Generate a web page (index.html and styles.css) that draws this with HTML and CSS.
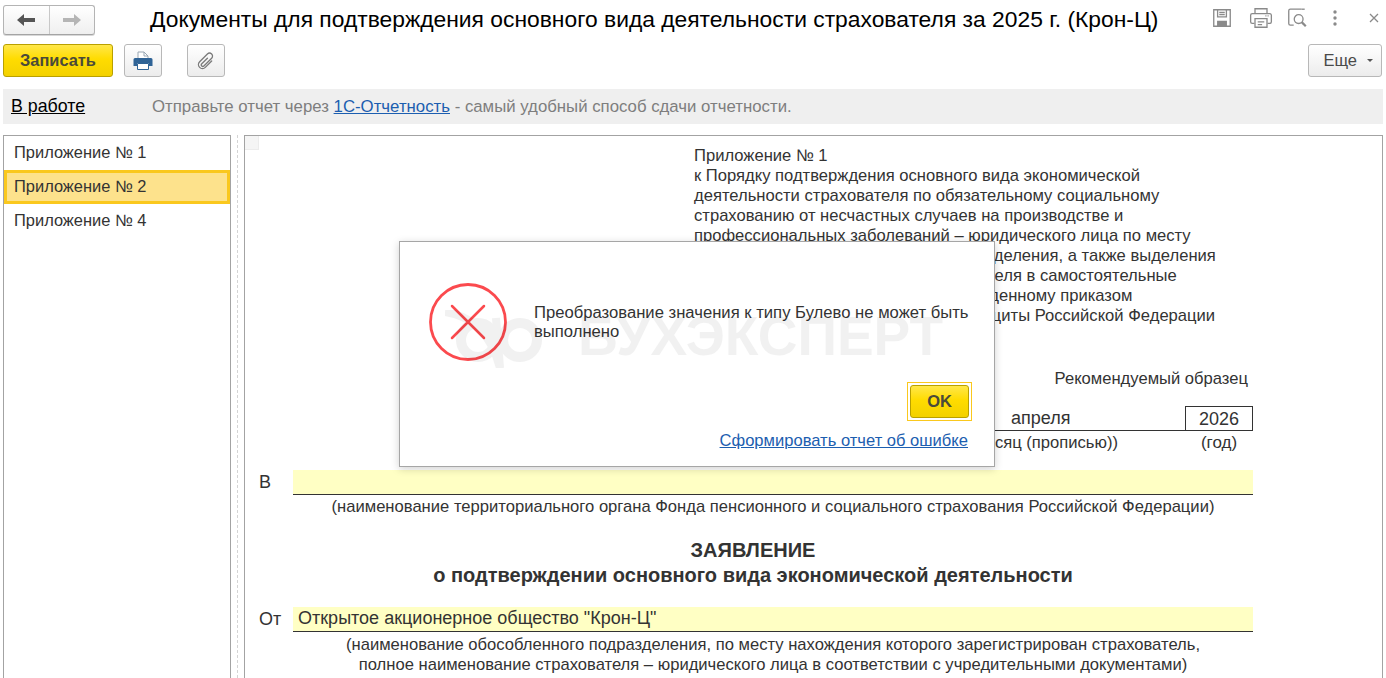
FILE: index.html
```html
<!DOCTYPE html>
<html lang="ru">
<head>
<meta charset="utf-8">
<title>Документы для подтверждения основного вида деятельности</title>
<link rel="stylesheet" href="styles.css">
</head>
<body>
<div class="page">
  <header class="titlebar">
    <div class="nav">
      <button class="nav-btn"><svg width="18" height="14" viewBox="0 0 18 14"><path d="M0 7 7 1v4h11v4H7v4z" fill="#555"/></svg></button>
      <button class="nav-btn"><svg width="18" height="14" viewBox="0 0 18 14"><path d="M18 7 11 1v4H0v4h11v4z" fill="#b5b5b5"/></svg></button>
    </div>
    <h1 class="title">Документы для подтверждения основного вида деятельности страхователя за 2025 г. (Крон-Ц)</h1>
    <div class="sys-icons">
      <svg class="sys" width="22" height="22" viewBox="0 0 20 20" fill="none" stroke="#8a8a8a" stroke-width="1.200"><path d="M2.500 2.500h15v15h-15z"/><path d="M6 2.500v6.500h8V2.500M7.500 5h5M7.500 7h5"/><path d="M5.500 17.500v-5h9v5z" fill="#8a8a8a" stroke="none"/></svg>
      <svg class="sys" width="24" height="22" viewBox="0 0 22 20" fill="none" stroke="#8a8a8a" stroke-width="1.200"><path d="M5.500 6V1.500h11V6"/><path d="M5 15H3q-1.500 0-1.500-1.500v-6Q1.500 6 3 6h16q1.500 0 1.500 1.500v6q0 1.500-1.500 1.500h-2"/><path d="M5.500 10.500h11v8h-11zM8 13.500h6M8 16h4"/><path d="M15 8h3" stroke-dasharray="1 1"/></svg>
      <svg class="sys" width="22" height="22" viewBox="0 0 20 20" fill="none" stroke="#8a8a8a" stroke-width="1.200"><path d="M14 2H4q-1.500 0-1.500 1.500V15q0 1.500 1.500 1.500h3"/><path d="M14 2h3"/><circle cx="11.500" cy="11" r="4"/><path d="m14.500 14 3.500 3.500" stroke-width="2"/></svg>
      <svg class="sys" width="6" height="20" viewBox="0 0 6 20" fill="#8a8a8a"><circle cx="3" cy="4" r="1.700"/><circle cx="3" cy="10" r="1.700"/><circle cx="3" cy="16" r="1.700"/></svg>
      <svg class="sys" width="10" height="10" viewBox="0 0 10 10" fill="none" stroke="#8a8a8a" stroke-width="1.300"><path d="m1 1 8 8M9 1 1 9"/></svg>
    </div>
  </header>

  <div class="toolbar">
    <button class="btn-primary btn-write">Записать</button>
    <button class="btn-icon btn-print"><svg width="20" height="20" viewBox="0 0 20 20"><path d="M5 9V1h6l4 4v4z" fill="#fff" stroke="#9aa7b3"/><path d="M11 1v4h4" fill="none" stroke="#9aa7b3"/><path d="M2 7h16q1.500 0 1.500 1.500V15H16v-3H4v3H.5V8.500Q.5 7 2 7z" fill="#2f6396"/><path d="M4.500 12.500h11v6h-11z" fill="#fff" stroke="#2f6396"/></svg></button>
    <button class="btn-icon btn-clip"><svg width="20" height="20" viewBox="0 0 20 20" fill="none" stroke="#7a7a7a" stroke-width="1.300" stroke-linecap="round"><path transform="rotate(45 10 10)" d="M9 7v8a1.500 1.500 0 0 0 3 0V4a3 3 0 0 0-6 0v11a4 4 0 0 0 8 0V6"/></svg></button>
    <button class="btn-more">Еще <span class="caret"></span></button>
  </div>

  <div class="status">
    <a class="status-state">В работе</a>
    <span class="status-text">Отправьте отчет через <a class="link">1С-Отчетность</a> - самый удобный способ сдачи отчетности.</span>
  </div>

  <main class="workspace">
    <nav class="side">
      <div class="side-item">Приложение № 1</div>
      <div class="side-item side-item-active">Приложение № 2</div>
      <div class="side-item">Приложение № 4</div>
    </nav>
    <div class="splitter"></div>
    <section class="doc">
      <div class="corner"></div>
      <div class="note">
        <div>Приложение № 1</div>
        <div>к Порядку подтверждения основного вида экономической</div>
        <div>деятельности страхователя по обязательному социальному</div>
        <div>страхованию от несчастных случаев на производстве и</div>
        <div>профессиональных заболеваний – юридического лица по месту</div>
        <div>нахождения его обособленного подразделения, а также выделения</div>
        <div>страхования подразделения страхователя в самостоятельные</div>
        <div>страховые классы&nbsp; и единицы, утвержденному приказом</div>
        <div>Министерства труда и&nbsp; социальной защиты Российской Федерации</div>
      </div>
      <div class="recommended">Рекомендуемый образец</div>
      <div class="date-row">
        <div class="month">апреля</div>
        <div class="year">2026</div>
      </div>
      <div class="date-caps">
        <div class="cap-month">(месяц (прописью))</div>
        <div class="cap-year">(год)</div>
      </div>
      <div class="field-row field-row-to">
        <div class="field-label">В</div>
        <div class="field"></div>
      </div>
      <div class="caption caption-to">(наименование территориального органа Фонда пенсионного и социального страхования Российской Федерации)</div>
      <h2 class="heading heading-first">ЗАЯВЛЕНИЕ</h2>
      <h2 class="heading">о подтверждении основного вида экономической деятельности</h2>
      <div class="field-row field-row-from">
        <div class="field-label">От</div>
        <div class="field">Открытое акционерное общество "Крон-Ц"</div>
      </div>
      <div class="caption caption-from">(наименование обособленного подразделения, по месту нахождения которого зарегистрирован страхователь,</div>
      <div class="caption">полное наименование страхователя – юридического лица в соответствии с учредительными документами)</div>
    </section>
  </main>

  <div class="dialog">
    <div class="dialog-body">
      <svg class="err" width="78" height="78" viewBox="0 0 78 78" fill="none" stroke="#fb4a4e" stroke-linecap="round"><circle cx="39" cy="39" r="37.500" stroke-width="2.800"/><path d="m23 23 32 32M55 23 23 55" stroke-width="2.500"/></svg>
      <div class="dialog-msg">Преобразование значения к типу Булево не может быть выполнено</div>
    </div>
    <div class="dialog-actions"><span class="ok-frame"><button class="btn-primary btn-ok">OK</button></span></div>
    <div class="dialog-link"><a class="link">Сформировать отчет об ошибке</a></div>
  </div>

  <div class="watermark">
    <svg width="100" height="58" viewBox="0 0 100 58" fill="none" stroke="#000" stroke-width="10"><circle cx="33" cy="30" r="17"/><circle cx="75" cy="30" r="17"/><path d="M0 2q42 6 55 56l-4-50" stroke-width="8"/></svg>
    <span>БУХЭКСПЕРТ</span>
  </div>
</div>
</body>
</html>
```
FILE: styles.css
```css
* { box-sizing: border-box; }
html, body { margin: 0; padding: 0; height: 100%; overflow: hidden; background: #fff; }
body { font-family: "Liberation Sans", Arial, sans-serif; color: #333; }
button { font-family: inherit; padding: 0; cursor: pointer; }
.page { position: relative; width: 1386px; height: 678px; overflow: hidden; display: flex; flex-direction: column; }

.titlebar { display: flex; align-items: center; height: 36px; padding: 3px 0 0 3px; flex: none; }
.nav { display: flex; width: 92px; height: 30px; border: 1px solid #b4b4b4; border-bottom-color: #a4a4a4; border-radius: 3px; background: linear-gradient(#fff, #efefef); box-shadow: 0 1px 0 #d8d8d8; flex: none; }
.nav-btn { flex: 1; border: 0; background: none; display: flex; align-items: center; justify-content: center; }
.nav-btn + .nav-btn { border-left: 1px solid #c8c8c8; }
.title { margin: 0 0 2px 55px; font-size: 22.840px; font-weight: 400; color: #000; white-space: nowrap; line-height: 30px; width: 1061px; flex: none; }
.sys-icons { display: flex; align-items: center; margin-bottom: 4px; }
.sys { display: block; flex: none; }
.sys:nth-child(2) { margin-left: 16px; }
.sys:nth-child(3) { margin-left: 13px; }
.sys:nth-child(4) { margin-left: 24px; }
.sys:nth-child(5) { margin-left: 31px; }

.toolbar { display: flex; align-items: center; height: 33px; margin-top: 8px; padding: 0 4px 0 3px; flex: none; }
.btn-primary { border: 1px solid #b9a000; border-radius: 3px; background: linear-gradient(#ffe74a, #ffdc00 45%, #f3d100); color: #4a4a3a; font-weight: 700; }
.btn-write { width: 110px; height: 33px; font-size: 16.400px; }
.btn-icon { width: 38px; height: 33px; border: 1px solid #b8b8b8; border-radius: 3px; background: linear-gradient(#fff, #ececec); display: flex; align-items: center; justify-content: center; }
.btn-print { margin-left: 11px; }
.btn-clip { margin-left: 25px; }
.btn-more { margin-left: auto; width: 74px; height: 33px; border: 1px solid #b8b8b8; border-radius: 3px; background: linear-gradient(#fff, #ececec); font-size: 16.500px; color: #4a4a4a; display: flex; align-items: center; justify-content: flex-end; gap: 10px; padding-right: 8px; }
.caret { width: 0; height: 0; border: 3px solid transparent; border-top-color: #555; border-bottom: 0; }

.status { display: flex; align-items: center; height: 35px; margin: 12px 3px 0; background: #efefef; flex: none; padding-left: 8px; font-size: 16.800px; }
.status-state { width: 141px; color: #000; font-size: 17.800px; text-decoration: underline; }
.status-text { color: #7e7e7e; }
.link { color: #1c5eb0; text-decoration: underline; }

.workspace { display: flex; flex: 1; margin: 11px 3px 0; min-height: 0; }
.side { width: 228px; flex: none; border: 1px solid #a3a3a3; border-bottom: 0; font-size: 16.450px; }
.side-item { height: 34px; padding: 0 0 2px 10px; display: flex; align-items: center; color: #333; }
.side-item-active { background: #fde28c; border: 3px solid #fac81e; padding: 0 0 2px 7px; }
.splitter { width: 1px; margin: 0 6px; border-left: 1px dashed #d4d4d4; flex: none; }
.doc { position: relative; flex: 1; border: 1px solid #a3a3a3; border-bottom: 0; font-size: 16.600px; overflow: hidden; }
.corner { position: absolute; left: 0; top: 0; width: 14px; height: 14px; background: #f5f5f5; border-right: 1px solid #ececec; border-bottom: 1px solid #ececec; }

.note { margin-left: 449px; padding-top: 10px; line-height: 20px; white-space: nowrap; }
.recommended { line-height: 20px; margin-top: 43px; padding-right: 134px; text-align: right; }
.date-row { display: flex; justify-content: flex-end; width: 450px; height: 25px; margin: 17px 129px 0 auto; border-bottom: 1px solid #333; font-size: 18px; }
.month { width: 174px; line-height: 25px; color: #333; }
.year { width: 68px; border: 1px solid #333; border-bottom: 0; text-align: center; line-height: 24px; }
.date-caps { display: flex; justify-content: flex-end; margin-right: 129px; line-height: 24px; }
.cap-month { width: 240px; text-align: right; padding-right: 67px; white-space: nowrap; }
.cap-year { width: 68px; text-align: center; font-size: 17px; }
.field-row { display: flex; margin-right: 129px; font-size: 18px; }
.field-row-to { margin-top: 15px; }
.field-row-from { margin-top: 19px; }
.field-label { width: 48px; padding-left: 14px; line-height: 24px; }
.field { flex: 1; height: 25px; padding-left: 5px; line-height: 23px; background: #ffffc4; border-bottom: 1px solid #333; }
.caption { margin-right: 129px; margin-left: 48px; text-align: center; line-height: 20px; white-space: nowrap; }
.caption-to { margin-top: 2px; }
.caption-from { margin-top: 3px; }
.heading { margin: 0 129px 0 0; font-size: 20px; font-weight: 700; text-align: center; line-height: 25px; padding-left: 8px; white-space: nowrap; }
.heading-first { margin-top: 21px; }

.dialog { position: absolute; left: 399px; top: 241px; width: 596px; height: 226px; background: #fff; border: 1px solid #a6a6a6; box-shadow: 0 2px 8px rgba(0, 0, 0, .18); display: flex; flex-direction: column; }
.dialog-body { display: flex; align-items: flex-start; padding: 41px 22px 0 29px; }
.err { flex: none; }
.dialog-msg { margin: 20px 0 0 27px; font-size: 16.650px; line-height: 19px; color: #333; }
.dialog-actions { display: flex; justify-content: flex-end; padding: 21px 22px 0 0; }
.ok-frame { display: block; padding: 2px; border: 1px solid #fac81e; }
.btn-ok { display: block; width: 59px; height: 33px; font-size: 16.500px; }
.dialog-link { text-align: right; padding: 10px 26px 0 0; font-size: 16.570px; line-height: 20px; }

.watermark { position: absolute; left: 445px; top: 310px; display: flex; align-items: center; gap: 33px; opacity: .05; pointer-events: none; }
.watermark span { font-size: 55px; font-weight: 700; color: #000; line-height: 54px; margin-top: -6px; }
```
